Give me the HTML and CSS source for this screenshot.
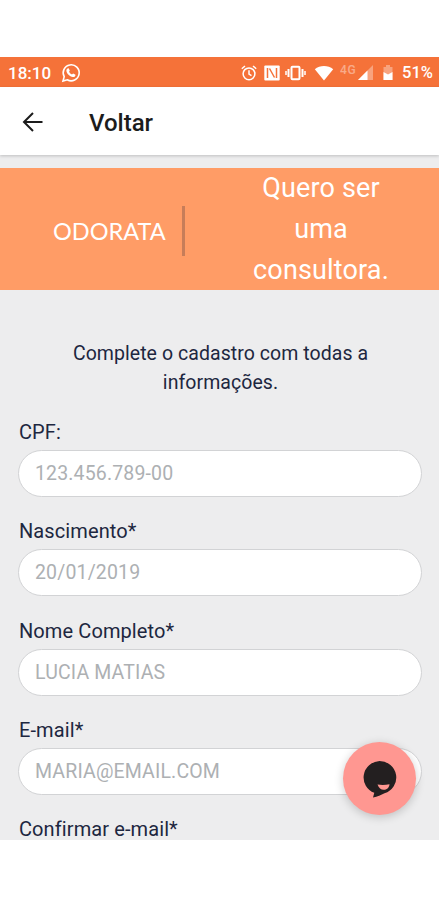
FILE: index.html
```html
<!DOCTYPE html>
<html lang="pt-BR">
<head>
    <meta charset="UTF-8">
    <meta name="viewport" content="width=device-width, initial-scale=1.0">
    <title>Odorata - Quero ser uma consultora</title>
    <link rel="stylesheet" href="styles.css">
</head>
<body>
    <div class="phone">
        <div class="status-bar">
            <span class="time">18:10</span>
            <svg class="whatsapp" width="20" height="20" viewBox="0 0 20 20">
                <path d="M2 18l1.200-4.300A8 8 0 1 1 6.300 16.800z" fill="none" stroke="#fff" stroke-width="1.600"/>
                <path d="M6.500 5.500l1.200-.3 1.100 2.500-.8 1.100c.7 1.300 1.700 2.200 3 2.800l1.100-1.100 2.400 1.200c0 1.600-1.200 2.500-2.700 2.300C8.500 13.500 5.800 10.800 5.400 8c-.1-1 .3-1.900 1.100-2.500z" fill="#fff"/>
            </svg>
            <div class="status-icons">
                <svg class="alarm" width="16" height="16" viewBox="0 0 16 16" fill="none" stroke="#fff" stroke-width="1.500">
                    <circle cx="8" cy="8.800" r="5.900"/>
                    <path d="M8 5.300v3.800l2.500 1.600M.8 3.700L4 1M15.200 3.700L12 1"/>
                </svg>
                <svg class="nfc" width="16" height="16" viewBox="0 0 16 16">
                    <rect x=".3" y=".5" width="15.400" height="15" rx="1" fill="#fff"/>
                    <path d="M3.500 3v10M5.500 3.500l5 9M12.500 3v10" fill="none" stroke="#f57239" stroke-width="1.500"/>
                </svg>
                <svg class="vibrate" width="21" height="16" viewBox="0 0 21 16" fill="none" stroke="#fff">
                    <rect x="6.500" y="1.700" width="8" height="12.600" rx="1" stroke-width="2"/>
                    <path d="M3.500 4v8M17.500 4v8" stroke-width="2"/>
                    <path d="M1 6v4M20 6v4" stroke-width="1.500"/>
                </svg>
                <svg class="wifi" width="20" height="16" viewBox="0 0 20 16">
                    <path d="M.8 4.200C6-.2 14-.2 19.200 4.200L10 15.500z" fill="#fff"/>
                </svg>
                <span class="network">4G</span>
                <svg class="signal" width="15" height="15" viewBox="0 0 15 15">
                    <path d="M0 15L15 0v15z" fill="#fff" opacity=".35"/>
                    <path d="M0 15L9.500 5.500V15z" fill="#fff"/>
                </svg>
                <svg class="battery" width="10" height="15" viewBox="0 0 10 15">
                    <path d="M3 0h4v2h2.500v13h-9V2H3z" fill="#fff" opacity=".35"/>
                    <path d="M.5 7L5 9.500 9.500 7v8h-9z" fill="#fff"/>
                </svg>
                <span class="percent">51%</span>
            </div>
        </div>

        <header class="app-bar">
            <svg class="back" width="22" height="20" viewBox="0 0 22 20" fill="none" stroke="#1c1c1c" stroke-width="2">
                <path d="M20.500 10H2M11 1L2 10l9 9"/>
            </svg>
            <h1>Voltar</h1>
        </header>

        <section class="banner">
            <div class="logo">ODORATA</div>
            <div class="divider"></div>
            <h2>Quero ser<br>uma<br>consultora.</h2>
        </section>

        <form class="signup">
            <p class="intro">Complete o cadastro com todas a<br>informações.</p>
            <label for="cpf">CPF:</label>
            <input type="text" id="cpf" placeholder="123.456.789-00">
            <label for="nascimento">Nascimento*</label>
            <input type="text" id="nascimento" placeholder="20/01/2019">
            <label for="nome">Nome Completo*</label>
            <input type="text" id="nome" placeholder="LUCIA MATIAS">
            <label for="email">E-mail*</label>
            <input type="text" id="email" placeholder="MARIA@EMAIL.COM">
            <label for="confirmar">Confirmar e-mail*</label>
        </form>

        <button type="button" class="chat" aria-label="Chat">
            <svg width="36" height="38" viewBox="0 0 36 38">
                <path d="M17.500 1a17 16.500 0 0 1 5 32.200C19 35 15.500 36.500 11 37.500l1.300-4.700A17 16.500 0 0 1 17.500 1z" fill="#231f20"/>
                <path d="M15.500 24.500c4 .6 8 .5 12-.3-.5 4-2.800 5.500-5.800 5.500-2.700 0-5-1.500-6.200-5.200z" fill="#ff9791"/>
            </svg>
        </button>
    </div>
</body>
</html>
```
FILE: styles.css
```css
body {
    font-family: Roboto, "Liberation Sans", sans-serif;
    margin: 0;
    padding: 57px 0 60px;
    background-color: #fff;
}
.phone {
    position: relative;
    height: 783px;
    overflow: hidden;
    background-color: #ededee;
}
/* Android status bar */
.status-bar {
    display: flex;
    align-items: center;
    height: 30px;
    padding: 1px 6px 0 8px;
    box-sizing: border-box;
    background-color: #f57239;
    color: #fff;
    font-size: 17px;
    font-weight: 500;
}
.time {
    width: 53px;
}
.status-icons {
    display: flex;
    align-items: center;
    margin-left: auto;
}
.nfc {
    margin-left: 7px;
}
.vibrate {
    margin-left: 5px;
}
.wifi {
    margin-left: 8px;
}
.network {
    margin: -6px 2px 0 6px;
    font-size: 12px;
    letter-spacing: 0.5px;
    opacity: 0.4;
}
.battery {
    margin: 0 9px 0 10px;
}
.percent {
    font-size: 16.5px;
}
.app-bar {
    display: flex;
    align-items: center;
    height: 68px;
    padding: 2px 22px 0;
    box-sizing: border-box;
    background-color: #fff;
    box-shadow: 0 1px 3px rgba(0, 0, 0, 0.2);
}
.app-bar h1 {
    margin: 1px 0 0 45px;
    color: #1c1c1c;
    font-size: 24px;
    font-weight: 500;
}
.banner {
    display: flex;
    align-items: center;
    height: 122px;
    margin-top: 13px;
    background-color: #ff9c66;
    color: #fff;
}
.logo {
    width: 129px;
    padding: 4px 0 0 53px;
    font-family: Lato, sans-serif;
    font-size: 23.5px;
    font-weight: 400;
}
.divider {
    width: 3px;
    height: 50px;
    margin-top: 4px;
    background-color: #c77d59;
}
.banner h2 {
    flex: 1;
    margin: 0 0 0 18px;
    text-align: center;
    font-size: 27px;
    font-weight: 400;
    line-height: 41px;
    letter-spacing: 0.15px;
}
.signup {
    display: flex;
    flex-direction: column;
    padding: 49px 17px 0 18px;
    color: #1d2740;
}
.intro {
    margin: 0 0 23px;
    padding-left: 1px;
    text-align: center;
    font-size: 19.5px;
    line-height: 29px;
    letter-spacing: 0.06px;
}
.signup label {
    padding-left: 1px;
    font-size: 20px;
    line-height: 24px;
    letter-spacing: 0.1px;
}
.signup input {
    height: 47px;
    margin: 6px 0 22.3px;
    padding: 0 16px;
    box-sizing: border-box;
    border: 1px solid #d2d3d5;
    border-radius: 24px;
    background-color: #fff;
    font-family: inherit;
    font-size: 19.5px;
    letter-spacing: 0.15px;
}
.signup input::placeholder {
    color: #adb0b3;
}
/* Floating chat button */
.chat {
    position: absolute;
    right: 23px;
    bottom: 25px;
    width: 73px;
    height: 73px;
    padding: 0;
    border: 0;
    border-radius: 50%;
    background-color: #ff9791;
    box-shadow: 0 2px 10px rgba(0, 0, 0, 0.2);
}
.chat svg {
    display: block;
    margin: 0 auto;
}
```
